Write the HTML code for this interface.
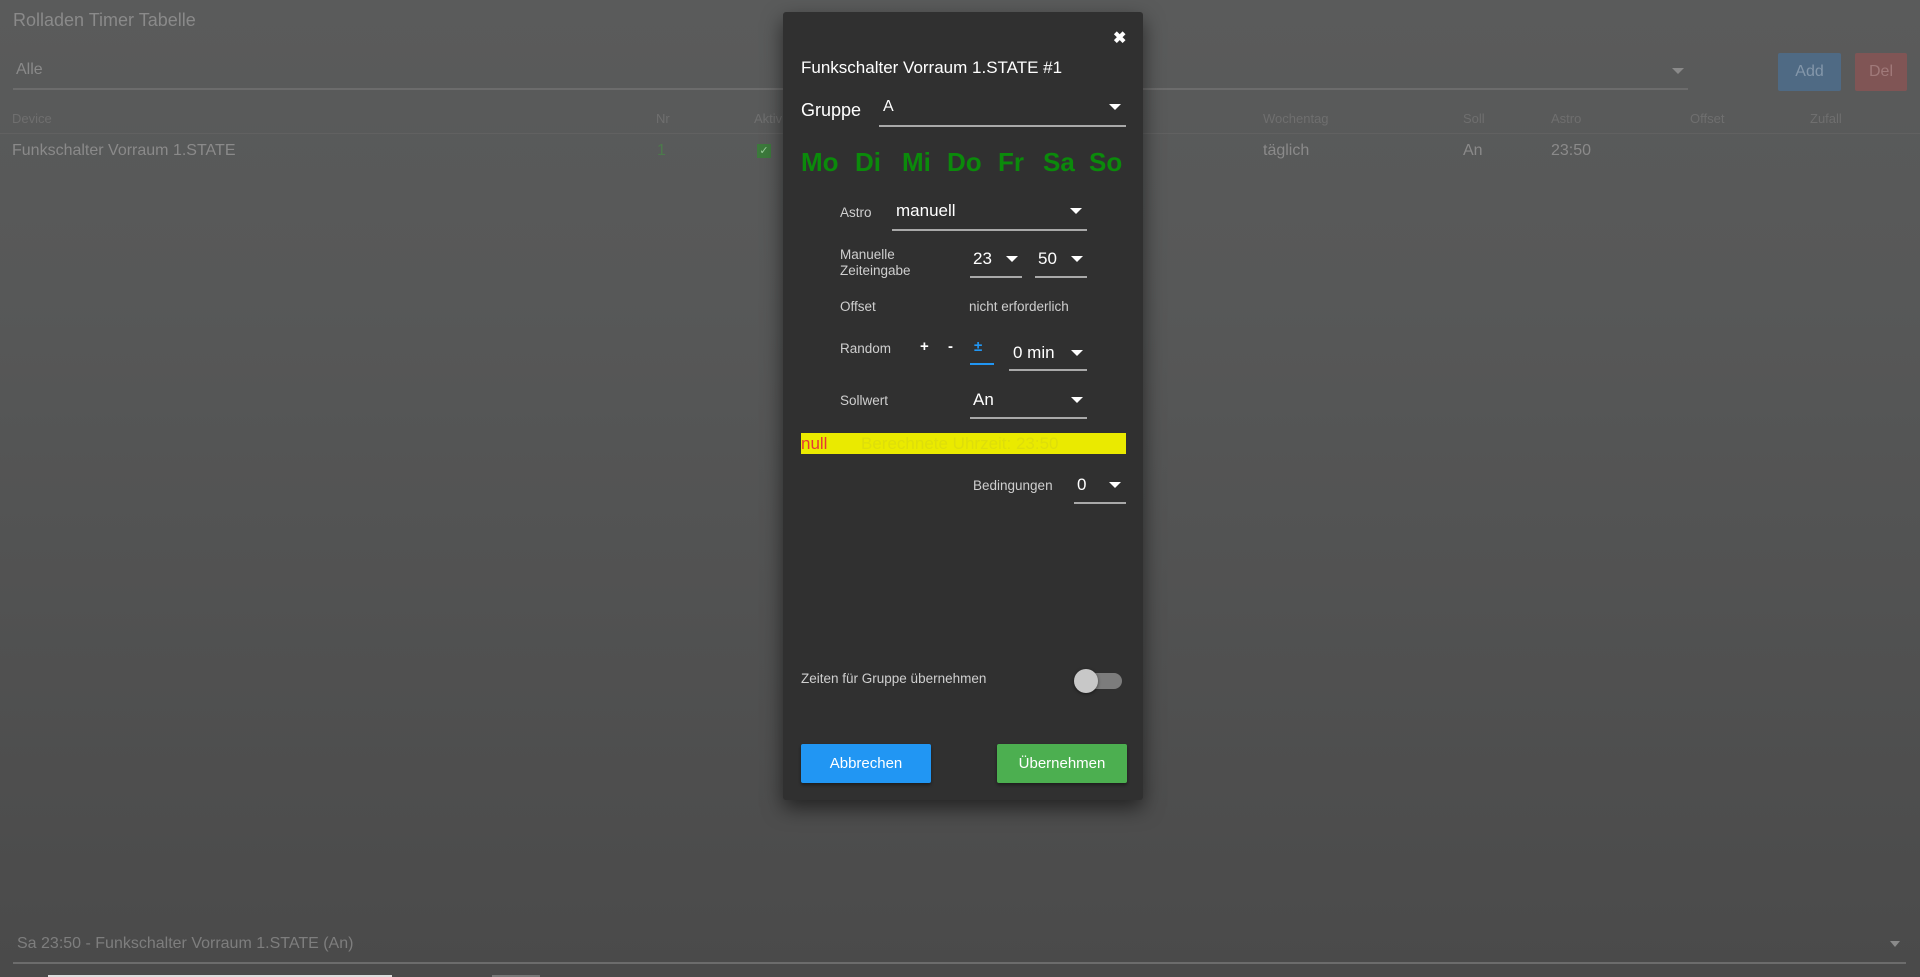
<!DOCTYPE html>
<html><head><meta charset="utf-8"><style>
*{margin:0;padding:0;box-sizing:border-box}
body{width:1920px;height:977px;overflow:hidden;background:linear-gradient(#5a5b5b,#575858 30%,#4a4a4a);font-family:"Liberation Sans",Arial,sans-serif;position:relative;color:#888}
.a{position:absolute;white-space:nowrap}
.bg{color:#8a8a8a}
.hd{font-size:13px;color:#6f6f6f}
.line{position:absolute;height:2px;background:#6c6c6c}
.tri{position:absolute;width:0;height:0;border-left:6px solid transparent;border-right:6px solid transparent;border-top:6px solid #fff}
.dlg{position:absolute;left:783px;top:12px;width:360px;height:788px;background:#303030;border-radius:3px;box-shadow:0 8px 20px rgba(0,0,0,.55)}
.w{color:#fff}
.l{color:#cfcfcf;font-size:13.5px}
.ul{position:absolute;height:2px;background:#a9a9a9}
.day{font-size:26px;font-weight:bold;color:#0b8a0b;top:135px}
</style></head><body>
<div class="a bg" style="left:13px;top:10px;font-size:18px">Rolladen Timer Tabelle</div>
<div class="a bg" style="left:16px;top:61px;font-size:16px">Alle</div>
<div class="line" style="left:13px;top:88px;width:1675px"></div>
<div class="tri" style="left:1672px;top:68px;border-top-color:#8a8a8a"></div>
<div class="a" style="left:1778px;top:53px;width:63px;height:38px;background:#4f6a84;border-radius:2px;color:#8497aa;font-size:16px;text-align:center;line-height:38px">Add</div>
<div class="a" style="left:1855px;top:53px;width:52px;height:38px;background:#805555;border-radius:2px;color:#a07a7a;font-size:16px;text-align:center;line-height:38px">Del</div>
<div class="a hd" style="left:12px;top:111px">Device</div>
<div class="a hd" style="left:656px;top:111px">Nr</div>
<div class="a hd" style="left:754px;top:111px">Aktiv</div>
<div class="a hd" style="left:1263px;top:111px">Wochentag</div>
<div class="a hd" style="left:1463px;top:111px">Soll</div>
<div class="a hd" style="left:1551px;top:111px">Astro</div>
<div class="a hd" style="left:1690px;top:111px">Offset</div>
<div class="a hd" style="left:1810px;top:111px">Zufall</div>
<div class="a" style="left:0;top:133px;width:1920px;height:1px;background:#616161"></div>
<div class="a bg" style="left:12px;top:142px;font-size:16px">Funkschalter Vorraum 1.STATE</div>
<div class="a" style="left:657px;top:142px;font-size:16px;color:#4c7a4c">1</div>
<div class="a" style="left:757px;top:144px;width:14px;height:14px;background:#3c7a3c;color:#9c9;font-size:11px;text-align:center;line-height:14px">✓</div>
<div class="a bg" style="left:1263px;top:142px;font-size:16px">täglich</div>
<div class="a bg" style="left:1463px;top:142px;font-size:16px">An</div>
<div class="a bg" style="left:1551px;top:142px;font-size:16px">23:50</div>
<div class="a" style="left:17px;top:935px;font-size:16px;color:#7e7e7e">Sa 23:50 - Funkschalter Vorraum 1.STATE (An)</div>
<div class="line" style="left:13px;top:962px;width:1893px"></div>
<div class="tri" style="left:1890px;top:941px;border-top-color:#8a8a8a;border-left-width:5px;border-right-width:5px"></div>
<div class="a" style="left:48px;top:975px;width:344px;height:2px;background:#ddd"></div>
<div class="a" style="left:492px;top:975px;width:48px;height:2px;background:#777"></div>

<div class="dlg">
<div class="a w" style="left:330px;top:16px;font-size:16px;font-weight:bold">✖</div>
<div class="a w" style="left:18px;top:46px;font-size:17px">Funkschalter Vorraum 1.STATE #1</div>
<div class="a w" style="left:18px;top:88px;font-size:18px">Gruppe</div>
<div class="a w" style="left:100px;top:86px;font-size:16px">A</div>
<div class="tri" style="left:326px;top:92px"></div>
<div class="ul" style="left:96px;top:113px;width:247px"></div>
<div class="a day" style="left:18px">Mo</div>
<div class="a day" style="left:72px">Di</div>
<div class="a day" style="left:119px">Mi</div>
<div class="a day" style="left:164px">Do</div>
<div class="a day" style="left:215px">Fr</div>
<div class="a day" style="left:260px">Sa</div>
<div class="a day" style="left:306px">So</div>

<div class="a l" style="left:57px;top:193px">Astro</div>
<div class="a w" style="left:113px;top:189px;font-size:17px">manuell</div>
<div class="tri" style="left:287px;top:196px"></div>
<div class="ul" style="left:109px;top:217px;width:195px"></div>

<div class="a l" style="left:57px;top:235px;line-height:16px">Manuelle<br>Zeiteingabe</div>
<div class="a w" style="left:190px;top:237px;font-size:17px">23</div>
<div class="tri" style="left:223px;top:244px"></div>
<div class="ul" style="left:187px;top:264px;width:52px"></div>
<div class="a w" style="left:255px;top:237px;font-size:17px">50</div>
<div class="tri" style="left:288px;top:244px"></div>
<div class="ul" style="left:252px;top:264px;width:52px"></div>

<div class="a l" style="left:57px;top:287px">Offset</div>
<div class="a l" style="left:186px;top:287px">nicht erforderlich</div>

<div class="a l" style="left:57px;top:329px">Random</div>
<div class="a w" style="left:137px;top:326px;font-size:15px;font-weight:bold">+</div>
<div class="a w" style="left:165px;top:326px;font-size:15px;font-weight:bold">-</div>
<div class="a" style="left:191px;top:326px;font-size:15px;color:#2196f3;font-weight:bold">±</div>
<div class="a" style="left:187px;top:351px;width:24px;height:2px;background:#2196f3"></div>
<div class="a w" style="left:230px;top:331px;font-size:17px">0 min</div>
<div class="tri" style="left:288px;top:338px"></div>
<div class="ul" style="left:226px;top:357px;width:78px"></div>

<div class="a l" style="left:57px;top:381px">Sollwert</div>
<div class="a w" style="left:190px;top:378px;font-size:17px">An</div>
<div class="tri" style="left:288px;top:385px"></div>
<div class="ul" style="left:187px;top:405px;width:117px"></div>

<div class="a" style="left:18px;top:421px;width:325px;height:21px;background:#eaea00"></div>
<div class="a" style="left:18px;top:421px;font-size:17px;color:#e53935;line-height:21px">null</div>
<div class="a" style="left:78px;top:421px;font-size:17px;color:#dede0a;line-height:21px">Berechnete Uhrzeit: 23:50</div>

<div class="a l" style="left:190px;top:466px">Bedingungen</div>
<div class="a w" style="left:294px;top:463px;font-size:17px">0</div>
<div class="tri" style="left:326px;top:470px"></div>
<div class="ul" style="left:291px;top:490px;width:52px"></div>

<div class="a l" style="left:18px;top:659px">Zeiten für Gruppe übernehmen</div>
<div class="a" style="left:303px;top:661px;width:36px;height:16px;border-radius:8px;background:#7c7c7c"></div>
<div class="a" style="left:291px;top:657px;width:24px;height:24px;border-radius:50%;background:#c8c8c8;box-shadow:0 1px 3px rgba(0,0,0,.5)"></div>

<div class="a" style="left:18px;top:732px;width:130px;height:39px;background:#2196f3;border-radius:2px;color:#fff;font-size:15px;text-align:center;line-height:39px;box-shadow:0 2px 3px rgba(0,0,0,.4)">Abbrechen</div>
<div class="a" style="left:214px;top:732px;width:130px;height:39px;background:#4caf50;border-radius:2px;color:#fff;font-size:15px;text-align:center;line-height:39px;box-shadow:0 2px 3px rgba(0,0,0,.4)">Übernehmen</div>
</div>
</body></html>
